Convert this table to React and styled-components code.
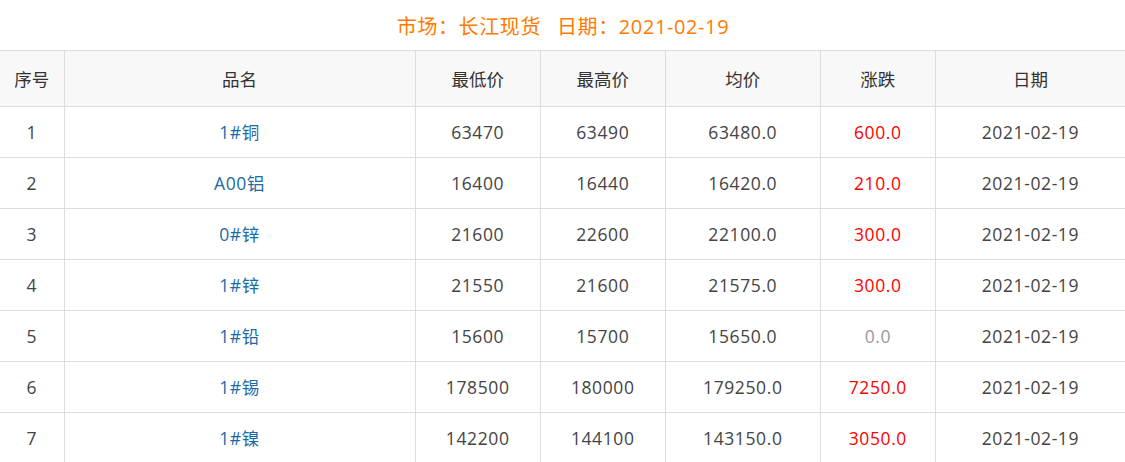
import React from 'react';
import styled, { createGlobalStyle } from 'styled-components';

const rows = [
  { id: 1, name: '1#铜', low: '63470', high: '63490', avg: '63480.0', change: '600.0', date: '2021-02-19' },
  { id: 2, name: 'A00铝', low: '16400', high: '16440', avg: '16420.0', change: '210.0', date: '2021-02-19' },
  { id: 3, name: '0#锌', low: '21600', high: '22600', avg: '22100.0', change: '300.0', date: '2021-02-19' },
  { id: 4, name: '1#锌', low: '21550', high: '21600', avg: '21575.0', change: '300.0', date: '2021-02-19' },
  { id: 5, name: '1#铅', low: '15600', high: '15700', avg: '15650.0', change: '0.0', date: '2021-02-19' },
  { id: 6, name: '1#锡', low: '178500', high: '180000', avg: '179250.0', change: '7250.0', date: '2021-02-19' },
  { id: 7, name: '1#镍', low: '142200', high: '144100', avg: '143150.0', change: '3050.0', date: '2021-02-19' },
];

const columns = [
  { title: '序号', width: 64 },
  { title: '品名', width: 351 },
  { title: '最低价', width: 125 },
  { title: '最高价', width: 125 },
  { title: '均价', width: 155 },
  { title: '涨跌', width: 115 },
  { title: '日期', width: 190 },
];

const GlobalStyle = createGlobalStyle`
  body {
    margin: 0;
    background: #fff;
    font-family: "Open Sans", "Noto Sans CJK SC", sans-serif;
  }
`;

const Wrapper = styled.div`
  width: 1125px;
  overflow: hidden;
`;

const Title = styled.div`
  height: 50px;
  display: flex;
  align-items: center;
  justify-content: center;
  padding-left: 1px;
  color: #ff7a00;
  font-size: 20px;
  letter-spacing: 0.6px;
`;

const Gap = styled.span`
  display: inline-block;
  width: 16px;
`;

const Table = styled.table`
  width: 1126px;
  border-collapse: collapse;
  table-layout: fixed;
`;

const HeadCell = styled.th`
  height: 55px;
  padding: 0;
  background: #f8f8f8;
  border: 1px solid #dddddd;
  border-left: ${({ $first }) => ($first ? 'none' : '1px solid #dddddd')};
  font-weight: normal;
  font-size: 17.5px;
  line-height: 22px;
  color: #333;
  text-align: center;
`;

const Cell = styled.td`
  height: 50px;
  padding: 0;
  border: 1px solid #dddddd;
  border-left: ${({ $first }) => ($first ? 'none' : '1px solid #dddddd')};
  font-size: 17.5px;
  line-height: 22px;
  letter-spacing: 0.6px;
  color: ${({ $tone }) =>
    $tone === 'name' ? '#1a6ba6' : $tone === 'up' ? '#ff0000' : $tone === 'flat' ? '#999999' : '#444444'};
  text-align: center;
`;

export default function App() {
  return (
    <Wrapper>
      <GlobalStyle />
      <Title>
        市场：长江现货<Gap />日期：2021-02-19
      </Title>
      <Table>
        <colgroup>
          {columns.map((c) => (
            <col key={c.title} style={{ width: c.width }} />
          ))}
        </colgroup>
        <thead>
          <tr>
            {columns.map((c, i) => (
              <HeadCell key={c.title} $first={i === 0}>
                {c.title}
              </HeadCell>
            ))}
          </tr>
        </thead>
        <tbody>
          {rows.map((r) => (
            <tr key={r.id}>
              <Cell $first>{r.id}</Cell>
              <Cell $tone="name">{r.name}</Cell>
              <Cell>{r.low}</Cell>
              <Cell>{r.high}</Cell>
              <Cell>{r.avg}</Cell>
              <Cell $tone={r.change === '0.0' ? 'flat' : 'up'}>{r.change}</Cell>
              <Cell>{r.date}</Cell>
            </tr>
          ))}
        </tbody>
      </Table>
    </Wrapper>
  );
}
